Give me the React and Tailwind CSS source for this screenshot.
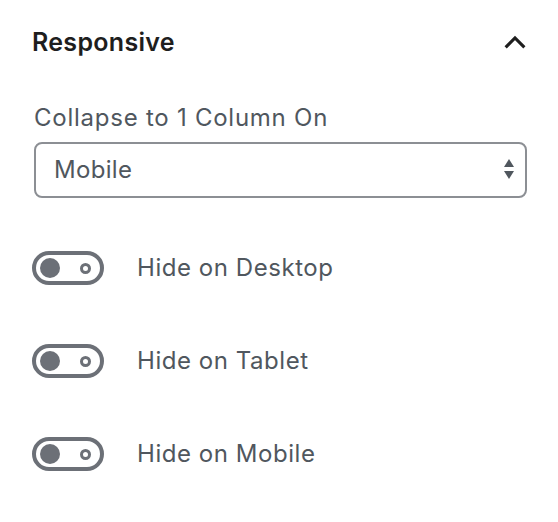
import React from "react";

const Toggle = ({ label }) => (
  <div className="flex items-center h-[34px]">
    <div className="flex items-center justify-between w-[72px] h-[34px] rounded-full border-[4px] border-[#6c7077] pl-[4px] pr-[9px]">
      <span className="block w-[20px] h-[20px] rounded-full bg-[#6c7077]"></span>
      <span className="block w-[11px] h-[11px] rounded-full border-[3px] border-[#6c7077]"></span>
    </div>
    <span className="ml-[33px] text-[24px] tracking-[0.55px] text-[#50575e]">{label}</span>
  </div>
);

export default function App() {
  return (
    <div className="w-[558px] h-[522px] bg-white pl-[32px] pr-[31px] pt-[24px] font-['Inter',sans-serif]">
      {/* Header */}
      <div className="flex items-center justify-between h-[38px]">
        <h2 className="text-[25px] font-semibold text-[#1e1e1e] tracking-[0.3px]">Responsive</h2>
        <svg className="w-[30px] h-[30px] mr-[-3px]" viewBox="0 0 24 24" fill="none" stroke="#1e1e1e" strokeWidth="2.5">
          <path d="M4.5 15.5 L12 8 L19.5 15.5" />
        </svg>
      </div>

      {/* Collapse select */}
      <div className="mt-[42px] ml-[2px]">
        <div className="text-[24px] leading-[28px] tracking-[0.75px] text-[#50575e]">Collapse to 1 Column On</div>
        <div className="mt-[10px] flex items-center justify-between h-[56px] rounded-[8px] border-2 border-[#8c8f94] pl-[18px] pr-[10px]">
          <span className="text-[24px] tracking-[0.3px] text-[#50575e]">Mobile</span>
          <svg className="w-[12px] h-[22px]" viewBox="0 0 12 22" fill="#50575e">
            <path d="M6 0 L11 8 L1 8 Z" />
            <path d="M1 12 L11 12 L6 20 Z" />
          </svg>
        </div>
      </div>

      {/* Toggles */}
      <div className="mt-[53px] flex flex-col gap-[59px]">
        <Toggle label="Hide on Desktop" />
        <Toggle label="Hide on Tablet" />
        <Toggle label="Hide on Mobile" />
      </div>
    </div>
  );
}
